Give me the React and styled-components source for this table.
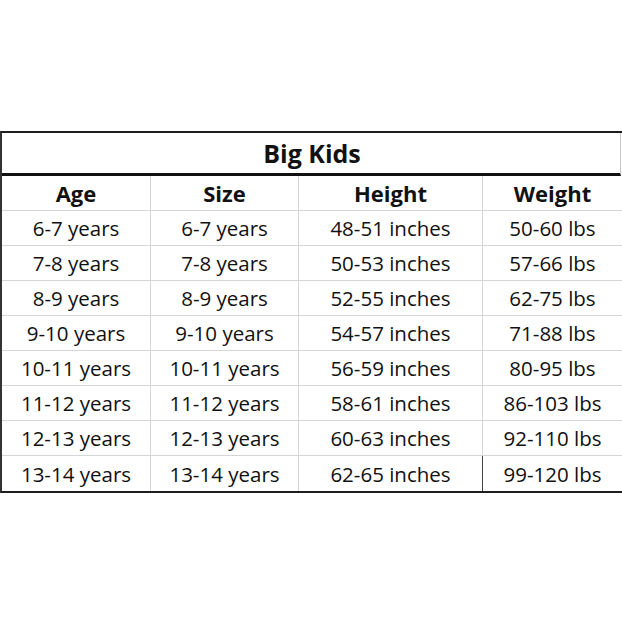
import styled, { createGlobalStyle } from "styled-components";

const GlobalStyle = createGlobalStyle`
  html, body {
    margin: 0;
    padding: 0;
    background: #ffffff;
  }
  body {
    font-family: "Open Sans", "Liberation Sans", sans-serif;
    color: #111111;
  }
`;

const headers = ["Age", "Size", "Height", "Weight"];

const rows = [
  ["6-7 years", "6-7 years", "48-51 inches", "50-60 lbs"],
  ["7-8 years", "7-8 years", "50-53 inches", "57-66 lbs"],
  ["8-9 years", "8-9 years", "52-55 inches", "62-75 lbs"],
  ["9-10 years", "9-10 years", "54-57 inches", "71-88 lbs"],
  ["10-11 years", "10-11 years", "56-59 inches", "80-95 lbs"],
  ["11-12 years", "11-12 years", "58-61 inches", "86-103 lbs"],
  ["12-13 years", "12-13 years", "60-63 inches", "92-110 lbs"],
  ["13-14 years", "13-14 years", "62-65 inches", "99-120 lbs"],
];

const App = () => {
  const last = rows.length - 1;
  return (
    <>
      <GlobalStyle />
      <Page>
        <Chart>
          <TitleRow>Big Kids</TitleRow>
          <Grid>
            {headers.map((h, i) => (
              <Cell key={h} $head $lastCol={i === 3}>
                {h}
              </Cell>
            ))}
            {rows.map((r, ri) =>
              r.map((v, ci) => (
                <Cell
                  key={ri + "-" + ci}
                  $lastCol={ci === 3}
                  $lastRow={ri === last}
                  $dark={ri === last && ci === 2}
                >
                  {v}
                </Cell>
              ))
            )}
          </Grid>
        </Chart>
      </Page>
    </>
  );
};

const Page = styled.div`
  width: 622px;
  height: 622px;
  padding-top: 131px;
  box-sizing: border-box;
  overflow: hidden;
`;

const Chart = styled.div`
  width: 622px;
  box-sizing: border-box;
  border-top: 2px solid #1e1e1e;
  border-left: 2px solid #333333;
  border-bottom: 2px solid #1e1e1e;
`;

const TitleRow = styled.div`
  height: 40px;
  display: flex;
  align-items: center;
  justify-content: center;
  border-bottom: 3px solid #111111;
  border-right: 1px solid #c8c8c8;
  margin-right: 1px;
  font-size: 25px;
  font-weight: 700;
  padding-left: 2px;
`;

const Grid = styled.div`
  display: grid;
  grid-template-columns: 149px 148px 184px 1fr;
  grid-auto-rows: 35px;
`;

const Cell = styled.div`
  display: flex;
  align-items: center;
  justify-content: center;
  box-sizing: border-box;
  padding-top: 0;
  white-space: nowrap;
  font-size: ${({ $head }) => ($head ? "22px" : "20.5px")};
  font-weight: ${({ $head }) => ($head ? 700 : 400)};
  border-right: ${({ $lastCol, $dark }) =>
    $lastCol ? "none" : $dark ? "1px solid #444444" : "1px solid #d6d6d6"};
  border-bottom: ${({ $lastRow }) => ($lastRow ? "none" : "1px solid #d6d6d6")};
`;

export default App;
